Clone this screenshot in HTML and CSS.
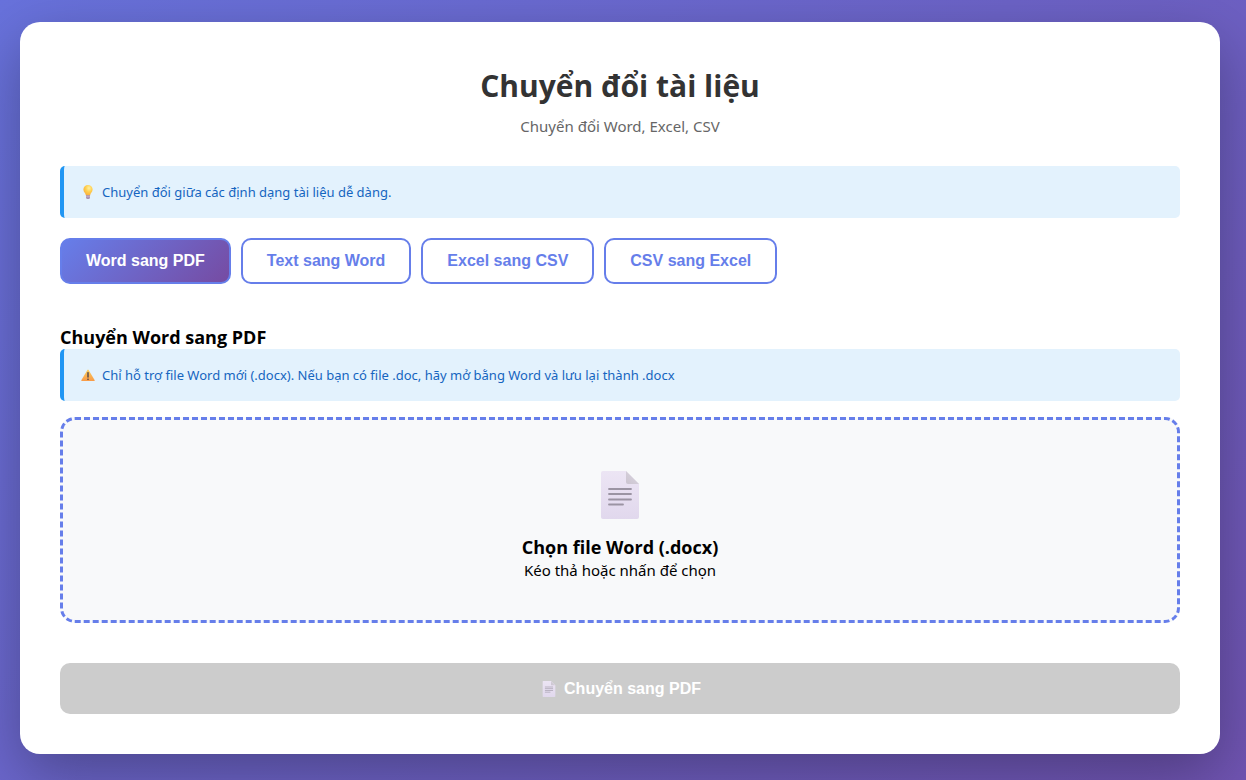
FILE: index.html
```
<!DOCTYPE html>
<html lang="vi">
<head>
    <meta charset="UTF-8">
    <meta name="viewport" content="width=device-width, initial-scale=1.0">
    <title>Chuyển đổi tài liệu</title>
    <link rel="stylesheet" href="styles.css">
</head>
<body>
    <!-- Shared icons -->
    <svg class="sprite" aria-hidden="true">
        <defs>
            <linearGradient id="paper" x1="0" y1="0" x2="0" y2="1">
                <stop offset="0" stop-color="#ece5f4"/>
                <stop offset="1" stop-color="#e1d8ed"/>
            </linearGradient>
            <linearGradient id="fold" x1="0" y1="1" x2="1" y2="0">
                <stop offset="0" stop-color="#cbc4d0"/>
                <stop offset="1" stop-color="#dcd7e0"/>
            </linearGradient>
            <radialGradient id="glow" cx="0.6" cy="0.3" r="0.7">
                <stop offset="0" stop-color="#fff0a0"/>
                <stop offset="0.5" stop-color="#ffd04f"/>
                <stop offset="1" stop-color="#f9ae3c"/>
            </radialGradient>
            <linearGradient id="amber" x1="0" y1="0" x2="0" y2="1">
                <stop offset="0" stop-color="#fdd05c"/>
                <stop offset="1" stop-color="#f79a48"/>
            </linearGradient>
        </defs>
        <symbol id="icon-page" viewBox="0 0 38 48">
            <path d="M2 0H25L38 13V46Q38 48 36 48H2Q0 48 0 46V2Q0 0 2 0Z" fill="url(#paper)"/>
            <path d="M25 0L38 13H27Q25 13 25 11Z" fill="url(#fold)"/>
            <path d="M8 18H30M8 23H30M8 28.500H30M8 33.500H22" stroke="#9b94a3" stroke-width="1.800" stroke-linecap="round"/>
        </symbol>
        <symbol id="icon-bulb" viewBox="0 0 14 14">
            <path d="M7 0A4.600 4.600 0 0 0 2.400 4.600C2.400 7.100 4.600 8 4.900 10.500H9.100C9.400 8 11.600 7.100 11.600 4.600A4.600 4.600 0 0 0 7 0Z" fill="url(#glow)"/>
            <path d="M5 10.300H9V12.500Q9 14 7 14T5 12.500Z" fill="#a78bab"/>
            <path d="M5 11.800H9" stroke="#d8c9dc" stroke-width="0.700"/>
        </symbol>
        <symbol id="icon-warning" viewBox="0 0 14 14">
            <path d="M6.400 1.900Q7 1 7.600 1.900L13.700 12.200Q14 13 13.200 13H0.800Q0 13 0.300 12.200Z" fill="url(#amber)"/>
            <path d="M7 4.700V9" stroke="#3f3b4d" stroke-width="1.300" stroke-linecap="round"/>
            <circle cx="7" cy="11.200" r="0.800" fill="#3f3b4d"/>
        </symbol>
    </svg>

    <main class="container">
        <header class="header">
            <h1>Chuyển đổi tài liệu</h1>
            <p>Chuyển đổi Word, Excel, CSV</p>
        </header>

        <div class="info-box">
            <svg class="icon"><use href="#icon-bulb"/></svg>
            <span>Chuyển đổi giữa các định dạng tài liệu dễ dàng.</span>
        </div>

        <div class="tabs">
            <button type="button" class="tab active">Word sang PDF</button>
            <button type="button" class="tab">Text sang Word</button>
            <button type="button" class="tab">Excel sang CSV</button>
            <button type="button" class="tab">CSV sang Excel</button>
        </div>

        <section class="tab-content">
            <h3>Chuyển Word sang PDF</h3>
            <div class="info-box">
                <svg class="icon"><use href="#icon-warning"/></svg>
                <span>Chỉ hỗ trợ file Word mới (.docx). Nếu bạn có file .doc, hãy mở bằng Word và lưu lại thành .docx</span>
            </div>

            <label class="upload-area" for="word-file">
                <svg class="upload-icon"><use href="#icon-page"/></svg>
                <strong>Chọn file Word (.docx)</strong>
                <span>Kéo thả hoặc nhấn để chọn</span>
            </label>
            <input type="file" id="word-file" accept=".docx" class="hidden">

            <button type="button" class="btn" disabled>
                <svg class="icon"><use href="#icon-page"/></svg>
                <span>Chuyển sang PDF</span>
            </button>
        </section>
    </main>
</body>
</html>
```
FILE: styles.css
```
* {
    margin: 0;
    padding: 0;
    box-sizing: border-box;
}

body {
    font-family: "Segoe UI", "Noto Sans", sans-serif;
    font-size: 15px;
    line-height: 22px;
    color: #000;
    background: linear-gradient(135deg, #6872dc 0%, #7054b2 100%);
    min-height: 100vh;
    padding: 22px 26px 26px 20px;
}

h1, h3, strong {
    font-family: "Segoe UI", "Open Sans", sans-serif;
}

.sprite {
    position: absolute;
    width: 0;
    height: 0;
}

.container {
    max-width: 1200px;
    margin: 0 auto;
    padding: 40px;
    background: white;
    border-radius: 20px;
    box-shadow: 0 20px 60px rgba(0, 0, 0, 0.3);
}

.header {
    text-align: center;
    margin-bottom: 29px;
}

.header h1 {
    font-size: 30px;
    line-height: 48px;
    color: #333;
    margin-bottom: 5px;
}

.header p {
    color: #666;
}

.info-box {
    display: flex;
    align-items: center;
    gap: 7px;
    padding: 15px 17px;
    background: #e3f2fd;
    border-left: 4px solid #2196f3;
    border-radius: 5px;
    color: #1565c0;
    font-size: 13px;
    margin-bottom: 20px;
}

.icon {
    width: 14px;
    height: 14px;
}

.tabs {
    display: flex;
    flex-wrap: wrap;
    gap: 10px;
    margin-bottom: 41px;
}

.tab {
    padding: 12px 24px;
    border: 2px solid #667eea;
    border-radius: 10px;
    background: white;
    color: #667eea;
    font-family: "Liberation Sans", Arial, sans-serif;
    font-size: 16px;
    font-weight: bold;
    line-height: 18px;
    cursor: pointer;
}

.tab.active {
    background: linear-gradient(135deg, #667eea 0%, #764ba2 100%);
    color: white;
}

.tab-content h3 {
    font-size: 18px;
    line-height: 24px;
}

.tab-content .info-box {
    margin-bottom: 16px;
}

.upload-area {
    display: flex;
    flex-direction: column;
    align-items: center;
    padding: 51px 40px 39px;
    border: 3px dashed #667eea;
    border-radius: 15px;
    background: #f8f9fa;
    cursor: pointer;
    margin-bottom: 40px;
}

.upload-icon {
    width: 38px;
    height: 48px;
    margin-bottom: 16px;
}

.upload-area strong {
    font-size: 18px;
    line-height: 24px;
}

.btn {
    display: flex;
    align-items: center;
    justify-content: center;
    gap: 8px;
    width: 100%;
    padding: 16px 15px 15px 18px;
    border: none;
    border-radius: 10px;
    background: #ccc;
    color: white;
    font-family: "Liberation Sans", Arial, sans-serif;
    font-size: 16px;
    font-weight: bold;
    line-height: 20px;
    cursor: not-allowed;
}

.btn .icon {
    height: 16px;
}

.hidden {
    display: none;
}
```
